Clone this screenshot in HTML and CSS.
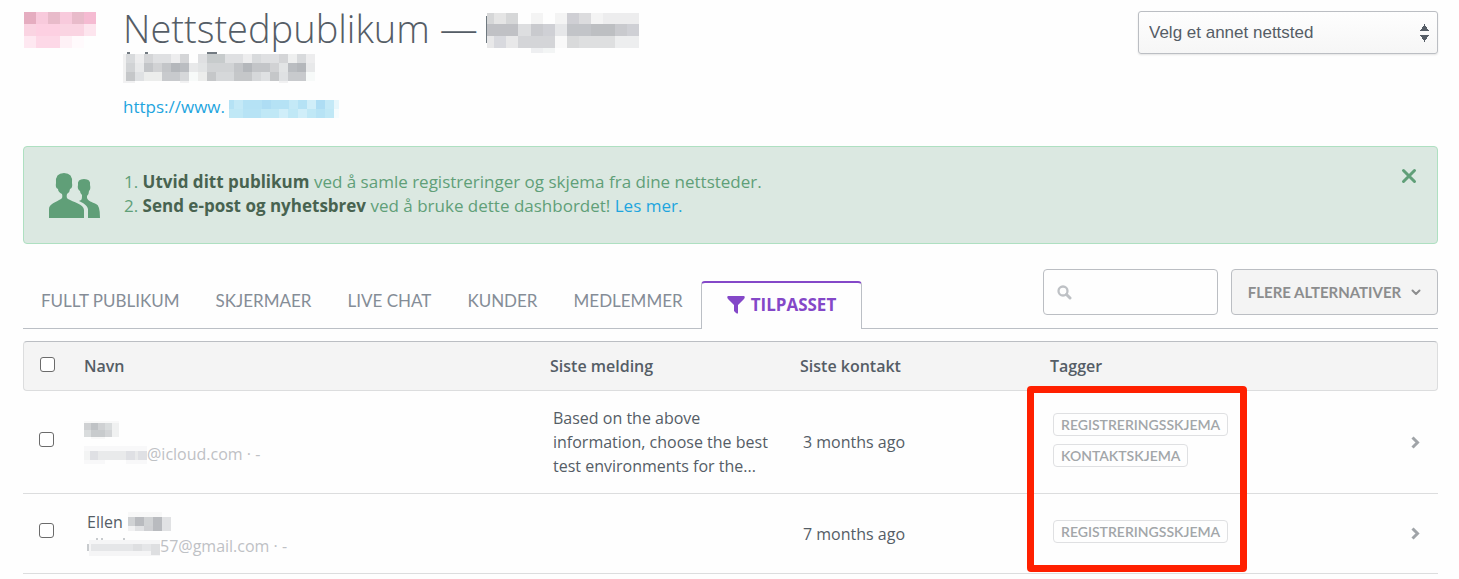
FILE: index.html
```html
<!DOCTYPE html>
<html lang="no">
<head>
<meta charset="utf-8">
<title>Nettstedpublikum</title>
<link rel="stylesheet" href="styles.css">
</head>
<body>
<header class="site">
  <svg class="logo" width="72" height="40" viewBox="0 0 72 40" shape-rendering="crispEdges" aria-hidden="true">
    <path fill="#e5adc0" d="M0 0h12v12H0z"/><path fill="#f8cadc" d="M12 0h12v12H12zM36 0h12v12H36z"/><path fill="#e8bbca" d="M24 0h12v12H24zM48 0h12v12H48z"/><path fill="#f5bbd2" d="M60 0h12v12H60z"/>
    <path fill="#fad4e2" d="M0 12h60v12H0z"/><path fill="#fdd0e2" d="M12 12h24v12H12z"/><path fill="#fde5ee" d="M60 12h12v12H60z"/>
    <path fill="#fee8f1" d="M0 24h12v12H0z"/><path fill="#fdd8e7" d="M12 24h24v12H12z"/><path fill="#fef1f6" d="M36 24h12v12H36z"/><path fill="#fffafc" d="M48 24h12v12H48z"/>
  </svg>
  <div class="site-info">
    <h1 class="title">
      <span class="title-line">Nettstedpublikum —
        <svg width="153" height="40" viewBox="-1 0 153 40" shape-rendering="crispEdges" aria-hidden="true">
          <path fill="#6f7980" d="M-1 3h1v27h-1z"/>
          <path fill="#d6d7d8" d="M0 0h7v11H0zM19 0h12v11H19z"/><path fill="#e5e5e5" d="M7 0h12v11H7z"/><path fill="#f4f4f4" d="M44 0h12v11H44zM68 0h12v11H68zM104 0h12v11h-12z"/><path fill="#cfcfd4" d="M80 0h12v11H80z"/><path fill="#dcdcde" d="M92 0h12v11H92z"/><path fill="#ededee" d="M116 0h36v11h-36z"/>
          <path fill="#c0c1c5" d="M0 11h31v12H0z"/><path fill="#dddee0" d="M31 11h13v12H31z"/><path fill="#c9cace" d="M44 11h12v12H44zM128 11h12v12h-12z"/><path fill="#cfd0d5" d="M56 11h12v12H56zM140 11h12v12h-12z"/><path fill="#e6e7e9" d="M68 11h12v12H68z"/><path fill="#c2c4c8" d="M80 11h24v12H80z"/><path fill="#bdbfc2" d="M104 11h24v12h-24z"/>
          <path fill="#e8e8e9" d="M0 23h7v12H0zM19 23h12v12H19z"/><path fill="#d8d9de" d="M7 23h12v12H7z"/><path fill="#d4d5d8" d="M31 23h37v12H31z"/><path fill="#f9f9f9" d="M68 23h12v12H68z"/><path fill="#d9dadb" d="M80 23h12v12H80z"/><path fill="#dedfe0" d="M92 23h36v12H92z"/><path fill="#edeeef" d="M128 23h24v12h-24z"/>
          <path fill="#eeeff1" d="M44 35h12v5H44z"/><path fill="#f3f5f5" d="M56 35h12v5H56z"/>
        </svg>
      </span>
      <svg class="title-rest" width="192" height="31" viewBox="0 0 192 31" shape-rendering="crispEdges" aria-hidden="true">
        <path fill="#737b82" d="M4 0h3v2H4zM22 0h3v2H22zM84 0h10v2H84z"/>
        <path fill="#f1f1f1" d="M0 2h3v27H0z"/>
        <path fill="#d8dadc" d="M3 2h9v9H3zM129 2h9v9h-9zM174 2h9v9h-9z"/><path fill="#ededee" d="M12 2h9v9h-9zM48 2h9v9h-9zM120 2h9v9h-9zM183 2h9v9h-9z"/><path fill="#d4d5d7" d="M21 2h9v9h-9zM57 2h9v9h-9zM156 2h9v9h-9z"/><path fill="#dfe0e2" d="M30 2h18v9H30zM75 2h9v9h-9zM102 2h18v9h-18zM138 2h18v9h-18z"/><path fill="#c7cbcc" d="M84 2h18v9H84z"/><path fill="#eeefef" d="M165 2h9v9h-9z"/>
        <path fill="#d1d3d5" d="M3 11h9v9H3zM102 11h9v9h-9zM84 11h18v9H84z"/><path fill="#e8e9ea" d="M12 11h9v9h-9zM66 11h9v9h-9zM183 11h9v9h-9z"/><path fill="#c3c5c8" d="M21 11h9v9h-9zM39 11h9v9h-9zM111 11h9v9h-9zM129 11h18v9h-18z"/><path fill="#d1d2d4" d="M30 11h9v9h-9zM147 11h9v9h-9z"/><path fill="#b4b7bb" d="M48 11h9v9h-9zM120 11h9v9h-9zM174 11h9v9h-9z"/><path fill="#babdc1" d="M57 11h9v9h-9zM165 11h9v9h-9z"/><path fill="#e2e4e5" d="M75 11h9v9h-9zM156 11h9v9h-9z"/>
        <path fill="#c5c7c9" d="M3 20h9v9H3zM84 20h9v9h-9zM111 20h18v9h-18zM147 20h9v9h-9z"/><path fill="#dfe1e3" d="M12 20h9v9h-9zM138 20h9v9h-9zM156 20h9v9h-9z"/><path fill="#ecedec" d="M21 20h18v9H21zM75 20h9v9h-9z"/><path fill="#c8cacd" d="M39 20h18v9H39zM165 20h18v9h-18z"/><path fill="#d6d8da" d="M57 20h9v9h-9zM93 20h18v9H93zM129 20h9v9h-9z"/><path fill="#f7faf9" d="M183 20h9v9h-9zM66 20h9v9h-9z"/>
        <path fill="#f1f1f2" d="M0 29h12v2H0zM57 29h9v2h-9zM156 29h9v2h-9z"/>
      </svg>
    </h1>
    <a class="url" href="#">https://www.<svg width="110" height="18" viewBox="0 0 110 18" shape-rendering="crispEdges" aria-hidden="true">
      <path fill="#b5e2f5" d="M0 0h105v9H0z"/><path fill="#c0e8f6" d="M0 9h105v9H0z"/><path fill="#aeddf4" d="M33 0h9v9h-9zM87 0h9v9h-9z"/><path fill="#c4e9f7" d="M5 0h9v9H5zM60 0h9v9h-9zM96 0h9v9h-9z"/><path fill="#d0eef9" d="M78 0h9v9h-9zM50 9h9v9h-9zM69 9h9v9h-9z"/><path fill="#b7e3f5" d="M14 9h18v9H14zM87 9h9v9h-9z"/><path fill="#e8f7fc" d="M105 0h5v9h-5z"/><path fill="#f5fcfe" d="M105 9h5v9h-5z"/>
    </svg></a>
  </div>
  <select class="picker" aria-label="Velg et annet nettsted"><option>Velg et annet nettsted</option></select>
</header>

<section class="notice">
  <svg class="people" width="51" height="45" viewBox="0 0 51 45" fill="#609f78" aria-hidden="true">
    <path d="M0 45V36C0 31 7 29 12 26Q14 25 13 21Q9 19 9 16Q6 15 7 10Q6 0 15 0Q24 0 23 10Q24 15 21 16Q21 19 18 21Q17 25 19 26C24 29 35 31 35 37V45Z"/>
    <path d="M39 45V36C38 32 34 30 30 28C33 27 33 26 33 22Q31 20 31 18Q28 16 29 12Q28 6 35 6Q42 6 41 12Q42 16 40 18Q40 21 38 23V25C39 28 43 29 47 31Q51 32 51 45Z"/>
  </svg>
  <div class="notice-text">
    <div>1. <strong>Utvid ditt publikum</strong> ved å samle registreringer og skjema fra dine nettsteder.</div>
    <div>2. <strong>Send e-post og nyhetsbrev</strong> ved å bruke dette dashbordet! <a href="#">Les mer.</a></div>
  </div>
  <button class="close" type="button" aria-label="Lukk">
    <svg width="16" height="16" viewBox="0 0 16 16" fill="none" stroke="#609f78" stroke-width="3" stroke-linecap="round"><path d="M2.500 2.500l11 11M13.500 2.500l-11 11"/></svg>
  </button>
</section>

<div class="toolbar">
  <nav class="tabs">
    <a class="tab" href="#">FULLT PUBLIKUM</a>
    <a class="tab" href="#">SKJERMAER</a>
    <a class="tab" href="#">LIVE CHAT</a>
    <a class="tab" href="#">KUNDER</a>
    <a class="tab" href="#">MEDLEMMER</a>
    <a class="tab active" href="#"><svg width="18" height="18" viewBox="0 0 18 18" fill="#8448c8" aria-hidden="true"><path d="M1 0H17Q18.500 1 17 3L11 9V17Q11 18 9 17L7 15V9L1 3Q-.5 1 1 0Z"/></svg>TILPASSET</a>
  </nav>
  <div class="tools">
    <label class="search">
      <svg width="15" height="15" viewBox="0 0 15 15" fill="none" stroke="#bec1c5" aria-hidden="true"><circle cx="6" cy="6" r="4.500" stroke-width="2.300"/><path d="M9.500 9.500l3.500 3.500" stroke-width="3" stroke-linecap="round"/></svg>
      <input type="text" aria-label="Søk">
    </label>
    <button class="more" type="button">FLERE ALTERNATIVER
      <svg width="10" height="7" viewBox="0 0 10 7" fill="none" stroke="#8c8d8e" stroke-width="2" stroke-linecap="round" stroke-linejoin="round"><path d="M1.500 1.500L5 5l3.500-3.500"/></svg>
    </button>
  </div>
</div>

<div class="list">
  <table class="contacts">
    <colgroup><col class="c-check"><col><col class="c-mid"><col class="c-mid"><col class="c-tags"><col class="c-go"></colgroup>
    <thead>
      <tr><th><input type="checkbox" aria-label="Velg alle"></th><th>Navn</th><th>Siste melding</th><th>Siste kontakt</th><th>Tagger</th><th></th></tr>
    </thead>
    <tbody>
      <tr>
        <td><input type="checkbox" aria-label="Velg kontakt"></td>
        <td>
          <div class="line flush"><svg width="43" height="18" viewBox="0 0 43 18" shape-rendering="crispEdges" aria-hidden="true"><path fill="#f8f8f8" d="M0 0h35v2H0zM7 16h14v2H7z"/><path fill="#cfd1d3" d="M0 2h7v7H0zM14 2h7v7h-7z"/><path fill="#bfc2c5" d="M7 2h7v7H7z"/><path fill="#d9dcdd" d="M21 2h7v7h-7zM0 9h7v7H0z"/><path fill="#f0f1f1" d="M28 2h7v14h-7z"/><path fill="#c8cbcd" d="M7 9h14v7H7z"/><path fill="#d3d5d7" d="M21 9h7v7h-7z"/></svg></div>
          <div class="line flush mail"><svg width="63" height="20" viewBox="0 0 63 20" shape-rendering="crispEdges" aria-hidden="true"><path fill="#f8f8f9" d="M0 2h63v5H0zM0 16h21v4H0zM42 16h21v4H42z"/><path fill="#e9eaeb" d="M0 7h63v9H0z"/><path fill="#dfe0e4" d="M6 7h8v9H6zM42 7h9v9h-9zM54 7h9v9h-9z"/><path fill="#f3f4f4" d="M0 7h6v9H0z"/></svg>@icloud.com · -</div>
        </td>
        <td><div class="message">Based on the above information, choose the best test environments for the...</div></td>
        <td>3 months ago</td>
        <td><div class="tags"><span class="tag">REGISTRERINGSSKJEMA</span><span class="tag">KONTAKTSKJEMA</span></div></td>
        <td><a class="go" href="#" aria-label="Åpne"><svg width="9" height="13" viewBox="0 0 9 13" fill="none" stroke="#a0a4a8" stroke-width="3"><path d="M1.500 1.500l5 5-5 5"/></svg></a></td>
      </tr>
      <tr>
        <td><input type="checkbox" aria-label="Velg Ellen"></td>
        <td>
          <div class="line">Ellen&nbsp;<svg width="44" height="20" viewBox="-1 0 44 20" shape-rendering="crispEdges" aria-hidden="true"><path fill="#f8f8f8" d="M0 0h34v5H0z"/><path fill="#d0d2d4" d="M0 5h7v9H0zM16 5h9v9h-9z"/><path fill="#b9bbbf" d="M7 5h9v9H7zM25 5h9v14h-9z"/><path fill="#e1e2e4" d="M34 5h9v14h-9zM7 14h9v5H7z"/><path fill="#f1f1f2" d="M0 14h7v5H0z"/><path fill="#cfd0d3" d="M16 14h9v5h-9z"/></svg></div>
          <div class="line mail"><svg width="73" height="20" viewBox="0 0 73 20" shape-rendering="crispEdges" aria-hidden="true"><path fill="#c8cbce" d="M0 8h2v7H0zM9 2h2v2H9zM14 2h2v2h-2zM36 2h2v2h-2z"/><path fill="#f5f5f6" d="M2 4h71v16H2z"/><path fill="#e5e6e8" d="M4 8h69v7H4z"/><path fill="#dedfe1" d="M46 8h9v7h-9zM64 8h9v11h-9z"/></svg>57@gmail.com · -</div>
        </td>
        <td></td>
        <td>7 months ago</td>
        <td><div class="tags"><span class="tag">REGISTRERINGSSKJEMA</span></div></td>
        <td><a class="go" href="#" aria-label="Åpne"><svg width="9" height="13" viewBox="0 0 9 13" fill="none" stroke="#a0a4a8" stroke-width="3"><path d="M1.500 1.500l5 5-5 5"/></svg></a></td>
      </tr>
    </tbody>
  </table>
  <div class="highlight"></div>
</div>
</body>
</html>
```

FILE: styles.css
```css
* { box-sizing: border-box; }
body {
  margin: 0;
  padding: 11px 21px 0 23px;
  background: #fefefe;
  color: #555d66;
  font: 16px/24px "Open Sans", sans-serif;
}
a { text-decoration: none; color: #1ea5de; }
svg { display: block; flex: none; }

.site { display: flex; align-items: flex-start; }
.logo { margin: 1px 27px 0 1px; }
.site-info { flex: 1; }
.title { margin: 0; font-size: 38px; line-height: 35px; font-weight: 300; }
.title-line { display: flex; align-items: flex-start; gap: 8px; height: 41px; white-space: nowrap; }
.title-line svg { margin-top: 2px; }
.url { display: flex; align-items: center; margin-top: 12px; height: 24px; font-size: 17px; }
.url svg { margin: 4px 0 0 4px; }
.picker {
  appearance: none;
  width: 300px;
  height: 43px;
  padding: 0 10px;
  border: 1px solid #bbbec3;
  border-radius: 3px;
  color: #555d66;
  font: 17px "Liberation Sans", sans-serif;
  box-shadow: 0 1px 2px #e4e4e4;
  background:
    conic-gradient(from 147deg at 50% 0, #555d66 66deg, transparent 0) right 8px top 12px / 9px 7px no-repeat,
    conic-gradient(from -33deg at 50% 100%, #555d66 66deg, transparent 0) right 8px top 23px / 9px 7px no-repeat,
    linear-gradient(#fefefe, #f6f6f6);
}

.notice {
  display: flex;
  align-items: flex-start;
  margin-top: 27px;
  padding: 23px 20px 25px 25px;
  border: 1px solid #aee0c1;
  border-radius: 4px;
  background: #dbe8e1;
  color: #609f78;
  font-size: 17px;
}
.people { margin-top: 3px; }
.notice-text { flex: 1; margin-left: 24px; }
.notice strong { color: #486350; }
.close { margin-top: -2px; padding: 0; border: 0; background: none; }

.toolbar {
  display: flex;
  justify-content: space-between;
  margin-top: 25px;
  height: 60px;
  border-bottom: 1px solid #bbbfc5;
}
.tabs { display: flex; margin-top: 12px; }
.tab {
  padding: 8px 18px 0;
  color: #858d97;
  font: 17px/24px Lato, sans-serif;
}
.tab.active {
  display: flex;
  align-items: center;
  gap: 6px;
  height: 48px;
  padding: 0 25px 2px;
  border: solid #bbbfc5;
  border-width: 0 1px;
  border-top: 2px solid #8448c8;
  border-radius: 4px 4px 0 0;
  background: #fefefe;
  color: #8448c8;
  font: bold 17px/24px "Open Sans", sans-serif;
}
.tools { display: flex; gap: 13px; height: 46px; }
.search {
  display: flex;
  align-items: center;
  width: 175px;
  padding: 0 13px;
  border: 1px solid #bbbec3;
  border-radius: 4px;
}
.search input { flex: 1; min-width: 0; border: 0; outline: 0; background: none; font: inherit; }
.more {
  display: flex;
  align-items: center;
  justify-content: center;
  gap: 10px;
  width: 207px;
  border: 1px solid #bbbec3;
  border-radius: 4px;
  background: #f4f4f4;
  color: #8c8d8e;
  font: bold 15px Lato, sans-serif;
}

.list { position: relative; margin-top: 12px; }
.contacts { width: 100%; table-layout: fixed; border-spacing: 0; }
.c-check { width: 61px; }
.c-mid { width: 250px; }
.c-tags { width: 350px; }
.c-go { width: 38px; }
th {
  height: 50px;
  padding: 0;
  border: solid #dcddde;
  border-width: 1px 0;
  border-top-color: #bbbec3;
  background: #f4f4f4;
  text-align: left;
  font-weight: 600;
}
th:first-child { padding-left: 16px; border-left-width: 1px; border-radius: 4px 0 0 4px; }
th:last-child { border-right-width: 1px; border-radius: 0 4px 4px 0; }
td { height: 80px; padding: 15px 0 15px 3px; border-bottom: 1px solid #dcddde; }
td:first-child { padding-left: 16px; }
input[type="checkbox"] {
  appearance: none;
  display: block;
  width: 15px;
  height: 15px;
  margin: 0 0 4px;
  border: 1px solid #6b6b6b;
  border-radius: 3px;
  background: #fff;
}
td input[type="checkbox"] { margin-bottom: 6px; }
.line { display: flex; align-items: center; height: 24px; }
.flush { margin-left: -3px; }
.mail { color: #bec1c5; }
.message { width: 225px; }
.tags { display: flex; flex-direction: column; align-items: flex-start; gap: 8px; padding-bottom: 4px; }
.tag {
  height: 23px;
  padding: 0 7px;
  border: 1px solid #dfe0e2;
  border-radius: 4px;
  color: #a2a6a9;
  font: 600 14px/21px Lato, sans-serif;
}
.go { display: flex; padding-left: 8px; }
.highlight {
  position: absolute;
  top: 45px;
  right: 191px;
  bottom: 2px;
  width: 220px;
  border: 7px solid #ff2000;
  border-radius: 4px;
}
```
